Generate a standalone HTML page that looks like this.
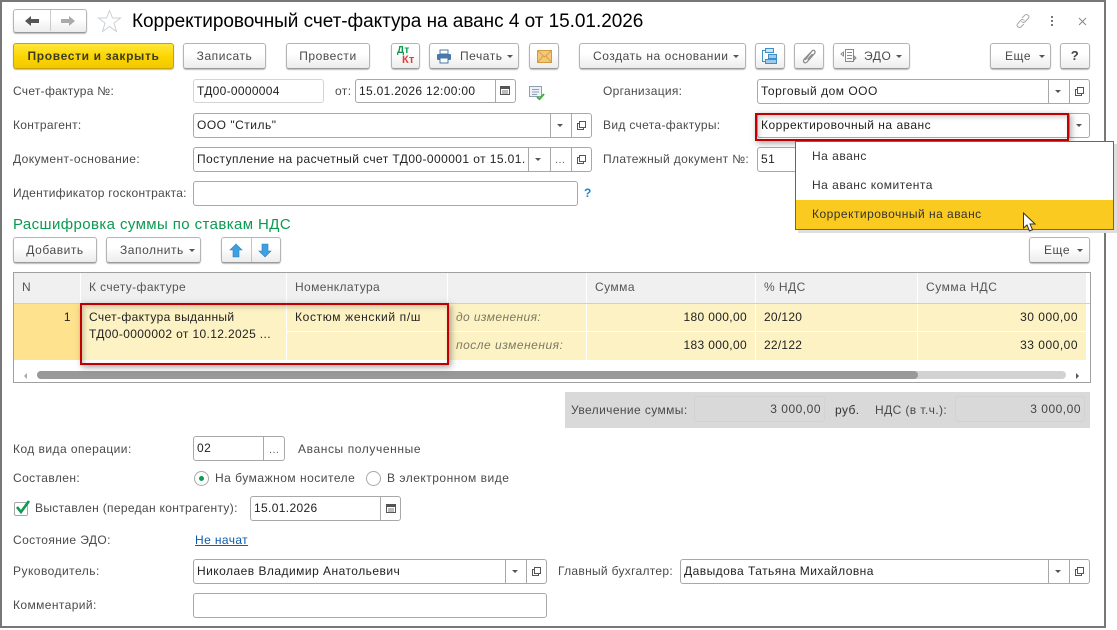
<!DOCTYPE html>
<html><head><meta charset="utf-8"><style>
html,body{margin:0;padding:0;background:#fff}
#p{position:relative;width:1117px;height:630px;overflow:hidden;background:#fff;font-family:"Liberation Sans",sans-serif;font-size:12px;color:#4a4a4a;letter-spacing:.4px}
#p div,#p svg{position:absolute;box-sizing:border-box}
.t{white-space:nowrap;line-height:16px;height:16px}
.w{letter-spacing:.5px}
.b{height:26px;border:1px solid #b4b4b4;border-bottom-color:#9a9a9a;border-radius:3px;background:linear-gradient(#fff,#fff 40%,#ececec);box-shadow:0 1px 1px #bbb;line-height:24px;text-align:center;white-space:nowrap;color:#4a4a4a;letter-spacing:.55px}
.f{height:25px;border:1px solid #a8a8a8;border-radius:3px;background:#fff;line-height:23px;padding-left:3px;color:#222;white-space:nowrap;overflow:hidden;letter-spacing:.5px}
.v{width:1px;background:#a8a8a8;height:23px}
.a{width:0;height:0;border-left:3px solid transparent;border-right:3px solid transparent;border-top:3px solid #555}
.o{width:7px;height:7px;border:1px solid #555;background:#fff;box-shadow:-2px 2px 0 -1px #fff,-2px 2px 0 0 #555}
.dots{color:#666;font-size:11px;line-height:14px;height:14px}
.h{top:273px;height:30px;background:#f0f0f0;line-height:28px;padding-left:8px;color:#555;white-space:nowrap;letter-spacing:.45px}
.c{background:#fdf2c3;line-height:27px;color:#222;white-space:nowrap;letter-spacing:.45px}
.red{border:2px solid #c00000;box-shadow:2px 2px 6px rgba(70,70,70,.5),inset 2px 2px 5px rgba(70,70,70,.28)}
</style></head><body><div id="p">
<!-- frame -->
<div style="left:0;top:0;width:1106px;height:2px;background:#777"></div>
<div style="left:0;top:0;width:2px;height:628px;background:#777"></div>
<div style="left:1104px;top:0;width:2px;height:628px;background:#777"></div>
<div style="left:0;top:626px;width:1106px;height:2px;background:#777"></div>

<!-- head -->
<div class="b" style="left:13px;top:9px;width:74px;height:24px"></div>
<div style="left:50px;top:10px;width:1px;height:21px;background:#ccc"></div>
<svg style="left:24px;top:15px" width="16" height="12"><path d="M1 6L7 1V4H15V8H7V11Z" fill="#555"/></svg>
<svg style="left:60px;top:15px" width="16" height="12"><path d="M15 6L9 1V4H1V8H9V11Z" fill="#aaa"/></svg>
<svg style="left:97px;top:9px" width="25" height="24"><path d="M12.5 1.5L15.5 9H23.5L17 14L19.5 22.5L12.5 17.5L5.5 22.5L8 14L1.500 9H9.500Z" fill="#fff" stroke="#ccd0d4" stroke-width="1"/></svg>
<div class="t" style="left:132px;top:10px;height:24px;line-height:24px;font-size:19px;color:#000;letter-spacing:-.04px">Корректировочный счет-фактура на аванс 4 от 15.01.2026</div>
<svg style="left:1014px;top:12px" width="18" height="18" fill="none" stroke="#aaa" stroke-width="1"><path d="M8 6L11 3C13 1.500 16 4 14.500 6L11.500 9.500C10 11 8.500 10.500 7.500 9.500"/><path d="M10 12L7 15C5 16.500 2 14 3.500 12L6.500 8.500C8 7 9.500 7.500 10.500 8.500"/></svg>
<svg style="left:1050px;top:15px" width="5" height="13" fill="#777"><rect x="1" y="1" width="2" height="2"/><rect x="1" y="5" width="2" height="2"/><rect x="1" y="9" width="2" height="2"/></svg>
<svg style="left:1078px;top:17px" width="10" height="10" stroke="#888" stroke-width="1"><path d="M1 1L8 8M8 1L1 8"/></svg>

<!-- toolbar -->
<div class="b" style="left:13px;top:43px;width:161px;background:linear-gradient(#ffe83a,#fbd400 55%,#f3c800);border-color:#c9a400;color:#3d3d20;font-weight:bold;letter-spacing:.65px">Провести и закрыть</div>
<div class="b" style="left:183px;top:43px;width:83px">Записать</div>
<div class="b" style="left:286px;top:43px;width:84px">Провести</div>
<div class="b" style="left:391px;top:43px;width:29px"></div>
<div class="t" style="left:397px;top:46px;font-size:10px;font-weight:bold;color:#0d9a4f;letter-spacing:.2px;line-height:10px;height:10px">Дт</div>
<div class="t" style="left:402px;top:55px;font-size:11px;font-weight:bold;color:#e43b3b;letter-spacing:.2px;line-height:11px;height:11px">Кт</div>
<div class="b" style="left:429px;top:43px;width:90px;text-align:left;padding-left:30px">Печать</div>
<svg style="left:436px;top:49px" width="16" height="15"><rect x="4" y="1" width="8" height="4" fill="#fff" stroke="#4a79a8"/><rect x="1" y="5" width="14" height="6" rx="1" fill="#4a79a8"/><rect x="4" y="9" width="8" height="5" fill="#fff" stroke="#4a79a8"/></svg>
<div class="a" style="left:507px;top:55px"></div>
<div class="b" style="left:529px;top:43px;width:30px"></div>
<svg style="left:537px;top:50px" width="15" height="13"><rect x=".5" y=".5" width="14" height="12" fill="#f3c879" stroke="#d29a3f"/><path d="M1 1L7.500 7L14 1M1 12L6 6M14 12L9 6" fill="none" stroke="#d9a04a"/></svg>
<div class="b" style="left:579px;top:43px;width:167px;text-align:left;padding-left:13px">Создать на основании</div>
<div class="a" style="left:733px;top:55px"></div>
<div class="b" style="left:755px;top:43px;width:30px"></div>
<svg style="left:762px;top:48px" width="16" height="16" fill="none" stroke="#3d8ec9"><rect x="3.500" y=".5" width="8" height="4" fill="#cfe5f5"/><rect x="6.500" y="6.500" width="8" height="4" fill="#9fcbea"/><rect x="3.500" y="11.500" width="11" height="4" fill="#9fcbea"/><path d="M3 2.500H.5V13.500H3"/></svg>
<div class="b" style="left:794px;top:43px;width:30px"></div>
<svg style="left:801px;top:48px" width="16" height="17" fill="none" stroke="#888" stroke-width="1.200"><path d="M4 12L11 3C13 1 15 3.500 13.500 5.500L6 14C4 16 1.500 14 3 11.500L10 4M6.500 11.500L11.500 6"/></svg>
<div class="b" style="left:833px;top:43px;width:77px;text-align:left;padding-left:30px">ЭДО</div>
<svg style="left:840px;top:48px" width="17" height="16" fill="none" stroke="#888"><rect x="5.500" y="1.500" width="8" height="12"/><path d="M7 4.500H12M7 7.500H12M7 10.500H12M1 6L3.500 4V8ZM16 10L14 8V12Z"/></svg>
<div class="a" style="left:896px;top:55px"></div>
<div class="b" style="left:990px;top:43px;width:61px;text-align:left;padding-left:14px">Еще</div>
<div class="a" style="left:1039px;top:55px"></div>
<div class="b" style="left:1060px;top:43px;width:30px;font-weight:bold;font-size:13px;color:#444">?</div>

<!-- row 1 -->
<div class="t" style="left:13px;top:83px;letter-spacing:.28px">Счет-фактура №:</div>
<div class="f" style="left:193px;top:79px;width:131px;height:24px;border-color:#d4d4d4;letter-spacing:.3px">ТД00-0000004</div>
<div class="t" style="left:335px;top:83px">от:</div>
<div class="f" style="left:355px;top:79px;width:161px;height:24px;letter-spacing:.33px">15.01.2026 12:00:00</div>
<div class="v" style="left:495px;top:80px;height:22px"></div>
<svg style="left:500px;top:85px" width="11" height="11"><rect x=".5" y="1.500" width="9" height="8" fill="#fff" stroke="#555"/><rect x="0" y="1" width="10" height="3" fill="#555"/><path d="M2 6H8M2 8H8" stroke="#777"/></svg>
<svg style="left:529px;top:86px" width="17" height="15"><rect x=".5" y=".5" width="12" height="10" fill="#eef2f6" stroke="#8ea0b4"/><path d="M3 3.500H10M3 6H10M3 8.500H8" stroke="#8ea0b4"/><path d="M8 11L10.500 13L15 8" fill="none" stroke="#3eb034" stroke-width="2"/></svg>
<div class="t" style="left:603px;top:83px;letter-spacing:.3px">Организация:</div>
<div class="f" style="left:757px;top:79px;width:333px;height:25px">Торговый дом ООО</div>
<div class="v" style="left:1048px;top:80px"></div><div class="v" style="left:1069px;top:80px"></div>
<div class="a" style="left:1055px;top:90px"></div><div class="o" style="left:1077px;top:87px"></div>

<!-- row 2 -->
<div class="t" style="left:13px;top:117px;letter-spacing:.28px">Контрагент:</div>
<div class="f" style="left:193px;top:113px;width:399px">ООО "Стиль"</div>
<div class="v" style="left:550px;top:114px"></div><div class="v" style="left:571px;top:114px"></div>
<div class="a" style="left:557px;top:124px"></div><div class="o" style="left:579px;top:121px"></div>
<div class="t" style="left:603px;top:117px;letter-spacing:.33px">Вид счета-фактуры:</div>
<div class="f" style="left:757px;top:113px;width:333px">Корректировочный на аванс</div>
<div class="v" style="left:1069px;top:114px"></div>
<div class="a" style="left:1076px;top:124px"></div>

<!-- row 3 -->
<div class="t" style="left:13px;top:151px">Документ-основание:</div>
<div class="f" style="left:193px;top:147px;width:399px;letter-spacing:.42px">Поступление на расчетный счет ТД00-000001 от 15.01.</div>
<div class="v" style="left:528px;top:148px"></div><div class="v" style="left:550px;top:148px"></div><div class="v" style="left:571px;top:148px"></div>
<div class="a" style="left:535px;top:158px"></div><div class="dots" style="left:555px;top:153px">...</div><div class="o" style="left:579px;top:155px"></div>
<div class="t" style="left:603px;top:151px;letter-spacing:.35px">Платежный документ №:</div>
<div class="f" style="left:757px;top:147px;width:120px">51</div>

<!-- row 4 -->
<div class="t" style="left:13px;top:185px;letter-spacing:.26px">Идентификатор госконтракта:</div>
<div class="f" style="left:193px;top:181px;width:385px"></div>
<div class="t" style="left:584px;top:185px;color:#1f86cf;font-weight:bold">?</div>

<!-- section -->
<div class="t" style="left:13px;top:216px;height:18px;line-height:18px;font-size:15px;color:#0a9a50;letter-spacing:.4px">Расшифровка суммы по ставкам НДС</div>
<div class="b" style="left:13px;top:237px;width:84px">Добавить</div>
<div class="b" style="left:106px;top:237px;width:95px;text-align:left;padding-left:13px">Заполнить</div>
<div class="a" style="left:189px;top:249px"></div>
<div class="b" style="left:221px;top:237px;width:60px"></div>
<div style="left:251px;top:238px;width:1px;height:24px;background:#c4c4c4"></div>
<svg style="left:229px;top:243px" width="14" height="15"><path d="M7 1L13 7H10V14H4V7H1Z" fill="#3f9fe0" stroke="#2a80c0" stroke-width=".6"/></svg>
<svg style="left:258px;top:243px" width="14" height="15"><path d="M7 14L13 8H10V1H4V8H1Z" fill="#3f9fe0" stroke="#2a80c0" stroke-width=".6"/></svg>
<div class="b" style="left:1029px;top:237px;width:61px;text-align:left;padding-left:14px">Еще</div>
<div class="a" style="left:1077px;top:249px"></div>

<!-- table -->
<div style="left:13px;top:272px;width:1078px;height:111px;border:1px solid #a0a0a0"></div>
<div class="h" style="left:14px;width:66px">N</div>
<div class="h" style="left:81px;width:205px;letter-spacing:.4px">К счету-фактуре</div>
<div class="h" style="left:287px;width:160px;letter-spacing:.38px">Номенклатура</div>
<div class="h" style="left:448px;width:138px"></div>
<div class="h" style="left:587px;width:168px">Сумма</div>
<div class="h" style="left:756px;width:161px">% НДС</div>
<div class="h" style="left:918px;width:168px;letter-spacing:.55px">Сумма НДС</div>
<div style="left:14px;top:303px;width:1076px;height:1px;background:#d0d0d0"></div>

<div class="c" style="left:14px;top:304px;width:66px;height:56px;background:#fee28d;text-align:right;padding-right:9px">1</div>
<div class="c" style="left:81px;top:304px;width:205px;height:56px;padding:5px 0 0 8px;line-height:17px;letter-spacing:.36px">Счет-фактура выданный<br>ТД00-0000002 от 10.12.2025 ...</div>
<div class="c" style="left:287px;top:304px;width:160px;height:27px;padding-left:8px;letter-spacing:.65px">Костюм женский п/ш</div>
<div class="c" style="left:287px;top:332px;width:160px;height:28px"></div>
<div class="c" style="left:448px;top:304px;width:138px;height:27px;padding-left:8px;font-style:italic;color:#7a7a62;letter-spacing:.4px">до изменения:</div>
<div class="c" style="left:448px;top:332px;width:138px;height:28px;padding-left:8px;font-style:italic;color:#7a7a62;letter-spacing:.5px">после изменения:</div>
<div class="c" style="left:587px;top:304px;width:168px;height:27px;text-align:right;padding-right:8px;letter-spacing:.35px">180 000,00</div>
<div class="c" style="left:587px;top:332px;width:168px;height:28px;text-align:right;padding-right:8px;letter-spacing:.35px">183 000,00</div>
<div class="c" style="left:756px;top:304px;width:161px;height:27px;padding-left:8px;letter-spacing:.25px">20/120</div>
<div class="c" style="left:756px;top:332px;width:161px;height:28px;padding-left:8px;letter-spacing:.25px">22/122</div>
<div class="c" style="left:918px;top:304px;width:168px;height:27px;text-align:right;padding-right:8px;letter-spacing:.5px">30 000,00</div>
<div class="c" style="left:918px;top:332px;width:168px;height:28px;text-align:right;padding-right:8px;letter-spacing:.5px">33 000,00</div>

<div style="left:37px;top:371px;width:1029px;height:8px;border-radius:4px;background:#d2d2d2"></div>
<div style="left:37px;top:371px;width:881px;height:8px;border-radius:4px;background:#999"></div>
<div style="left:24px;top:373px;width:0;height:0;border:3px solid transparent;border-right-color:#aaa;border-left:0"></div>
<div style="left:1076px;top:373px;width:0;height:0;border:3px solid transparent;border-left-color:#555;border-right:0"></div>

<div class="red" style="left:80px;top:303px;width:369px;height:62px"></div>

<!-- summary -->
<div style="left:565px;top:392px;width:525px;height:36px;background:#d9d9d9"></div>
<div class="t" style="left:571px;top:402px">Увеличение суммы:</div>
<div class="f" style="left:694px;top:396px;width:131px;height:26px;background:#d9d9d9;border-color:#d2d2d2;text-align:right;padding:0 3px 0 0;color:#444;line-height:24px">3 000,00</div>
<div class="t" style="left:835px;top:402px;color:#333">руб.</div>
<div class="t" style="left:875px;top:402px">НДС (в т.ч.):</div>
<div class="f" style="left:955px;top:396px;width:130px;height:26px;background:#d9d9d9;border-color:#d2d2d2;text-align:right;padding:0 3px 0 0;color:#444;line-height:24px">3 000,00</div>

<!-- bottom -->
<div class="t" style="left:13px;top:441px;letter-spacing:.45px">Код вида операции:</div>
<div class="f" style="left:193px;top:436px;width:92px">02</div>
<div class="v" style="left:263px;top:437px"></div><div class="dots" style="left:269px;top:443px">...</div>
<div class="t w" style="left:298px;top:441px;letter-spacing:.6px">Авансы полученные</div>

<div class="t" style="left:13px;top:470px">Составлен:</div>
<div style="left:194px;top:471px;width:15px;height:15px;border-radius:50%;border:1px solid #a8a8a8;background:#fff"></div>
<div style="left:199px;top:476px;width:5px;height:5px;border-radius:50%;background:#0f9a50"></div>
<div class="t w" style="left:215px;top:470px">На бумажном носителе</div>
<div style="left:366px;top:471px;width:15px;height:15px;border-radius:50%;border:1px solid #a8a8a8;background:#fff"></div>
<div class="t w" style="left:387px;top:470px">В электронном виде</div>

<div style="left:14px;top:502px;width:14px;height:14px;border:1px solid #a8a8a8;border-radius:2px;background:#fff"></div>
<svg style="left:15px;top:499px" width="16" height="16"><path d="M2 8L6 13L14 2" fill="none" stroke="#0f9a50" stroke-width="2.600"/></svg>
<div class="t" style="left:35px;top:500px;letter-spacing:.33px">Выставлен (передан контрагенту):</div>
<div class="f" style="left:250px;top:496px;width:151px;letter-spacing:.35px">15.01.2026</div>
<div class="v" style="left:380px;top:497px"></div>
<svg style="left:386px;top:503px" width="11" height="11"><rect x=".5" y="1.500" width="9" height="8" fill="#fff" stroke="#555"/><rect x="0" y="1" width="10" height="3" fill="#555"/><path d="M2 6H8M2 8H8" stroke="#777"/></svg>

<div class="t" style="left:13px;top:532px">Состояние ЭДО:</div>
<div class="t" style="left:195px;top:532px;color:#0d5bab;text-decoration:underline">Не начат</div>

<div class="t" style="left:13px;top:563px;letter-spacing:.47px">Руководитель:</div>
<div class="f" style="left:193px;top:559px;width:354px;letter-spacing:.47px">Николаев Владимир Анатольевич</div>
<div class="v" style="left:505px;top:560px"></div><div class="v" style="left:526px;top:560px"></div>
<div class="a" style="left:512px;top:570px"></div><div class="o" style="left:534px;top:567px"></div>
<div class="t" style="left:558px;top:563px;letter-spacing:.3px">Главный бухгалтер:</div>
<div class="f" style="left:680px;top:559px;width:410px;letter-spacing:.47px">Давыдова Татьяна Михайловна</div>
<div class="v" style="left:1048px;top:560px"></div><div class="v" style="left:1069px;top:560px"></div>
<div class="a" style="left:1055px;top:570px"></div><div class="o" style="left:1077px;top:567px"></div>

<div class="t" style="left:13px;top:597px">Комментарий:</div>
<div class="f" style="left:193px;top:593px;width:354px"></div>

<!-- red rect 1 -->
<div class="red" style="left:755px;top:113px;width:314px;height:28px"></div>

<!-- dropdown -->
<div style="left:795px;top:141px;width:319px;height:89px;background:#fff;border:1px solid #666;box-shadow:3px 3px 0 #dedede"></div>
<div style="left:796px;top:200px;width:317px;height:29px;background:#fbca20"></div>
<div class="t w" style="left:812px;top:148px;color:#333">На аванс</div>
<div class="t w" style="left:812px;top:177px;color:#333">На аванс комитента</div>
<div class="t w" style="left:812px;top:206px;color:#333;letter-spacing:.48px">Корректировочный на аванс</div>
<svg style="left:1022px;top:212px" width="16" height="21"><path d="M1.500 1V16L5 13L7.500 19L10.500 17.700L8 12H13Z" fill="#fff" stroke="#333"/></svg>
</div></body></html>
